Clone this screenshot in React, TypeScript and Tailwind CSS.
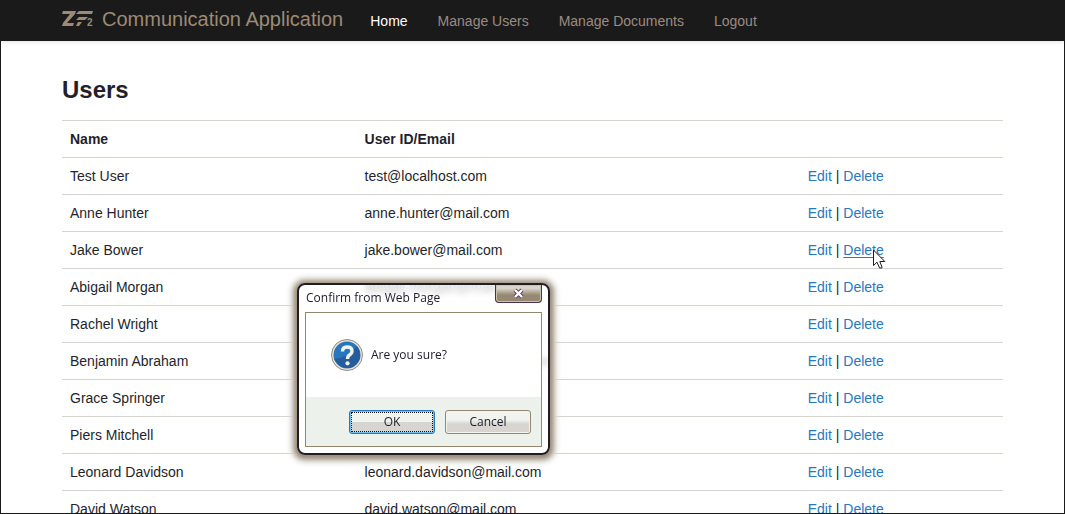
import React from "react";

type User = { name: string; email: string };

const users: User[] = [
  { name: "Test User", email: "test@localhost.com" },
  { name: "Anne Hunter", email: "anne.hunter@mail.com" },
  { name: "Jake Bower", email: "jake.bower@mail.com" },
  { name: "Abigail Morgan", email: "abigail.morgan@mail.com" },
  { name: "Rachel Wright", email: "rachel.wright@mail.com" },
  { name: "Benjamin Abraham", email: "benjamin.abraham@mail.com" },
  { name: "Grace Springer", email: "grace.springer@mail.com" },
  { name: "Piers Mitchell", email: "piers.mitchell@mail.com" },
  { name: "Leonard Davidson", email: "leonard.davidson@mail.com" },
  { name: "David Watson", email: "david.watson@mail.com" },
];

const navItems = ["Home", "Manage Users", "Manage Documents", "Logout"];

function Logo() {
  return (
    <svg width="32" height="16" viewBox="0 0 32 16" fill="#9b8b75" aria-hidden="true">
      <path d="M1 0H14L13 3L5 12H12L11 15H0L1 12L8 3H0Z" />
      <path d="M17 0H31L30 3H14Z" />
      <path d="M17 6H26L23 9H14Z" />
      <path d="M16 11H20L17 15H14Z" />
      <text x="25" y="15" fontSize="10" fontWeight="700" fontFamily="Liberation Sans, sans-serif">2</text>
    </svg>
  );
}

function Pointer() {
  return (
    <svg className="absolute left-[30px] top-[7px]" width="13" height="20" viewBox="0 0 13 20" aria-hidden="true">
      <path
        d="M.5 1V16.5L4 13.2L6.6 19H8.8L9 18L6.8 12.5H11.8Z"
        fill="#fff"
        stroke="#221a24"
        strokeWidth="1"
      />
    </svg>
  );
}

function Header() {
  return (
    <header className="h-10 shrink-0 bg-[#1a1a1a] shadow-[0_1px_4px_#dde3dc]">
      <div className="mx-auto flex h-10 max-w-[941px] items-center">
        <a href="#" className="flex items-center gap-2 pb-1 text-xl leading-5 text-[#9b8b75]">
          <Logo />
          <span>Communication Application</span>
        </a>
        <nav className="ml-3 flex">
          {navItems.map((item, i) => (
            <a
              key={item}
              href="#"
              className={i === 0 ? "px-[15px] text-sm text-white" : "px-[15px] text-sm text-[#9b8b82]"}
            >
              {item}
            </a>
          ))}
        </nav>
      </div>
    </header>
  );
}

function ConfirmDialog() {
  return (
    <div
      role="dialog"
      aria-labelledby="confirm-title"
      className="absolute left-[296px] top-[282px] w-[253px] rounded-lg border-2 border-[#211d22] bg-white/70 px-1.5 pb-1.5 font-['Open_Sans',sans-serif] text-xs text-[#1c1a2b] shadow-[0_1px_4px_3px_#9a8c7a,0_1px_5px_7px_#dcdad5] backdrop-blur-[3px]"
    >
      <div className="flex h-[27px] items-start justify-between">
        <h2 id="confirm-title" className="pl-px pt-[5px] leading-4">Confirm from Web Page</h2>
        <button
          type="button"
          aria-label="Close"
          className="flex h-[18px] w-[47px] items-center justify-center rounded-b-[4px] border border-t-0 border-[#43304a] bg-linear-to-b from-[#d8d4cb] from-20% to-[#978871] to-60% shadow-[inset_0_0_0_1px_#c9c2b6]"
        >
          <svg width="13" height="11" viewBox="0 0 13 11" aria-hidden="true">
            <path d="M3 2L10 9M10 2L3 9" stroke="#5b3c5c" strokeWidth="4" />
            <path d="M3 2L10 9M10 2L3 9" stroke="#fff" strokeWidth="2.4" />
          </svg>
        </button>
      </div>
      <div className="border border-[#94876f]">
        <div className="flex h-[84px] items-center gap-2 bg-white pl-[25px]">
          <svg width="32" height="32" viewBox="0 0 32 32" aria-hidden="true">
            <circle cx="16" cy="16" r="15.5" fill="#e7e5df" stroke="#978a77" />
            <circle cx="16" cy="16" r="13.5" fill="#2877bd" />
            <path d="M3 20Q16 20 26 7Q34 20 22 28Q10 32 3 20Z" fill="#265b9c" />
            <path d="M11.5 12.5Q11.5 8 16 8Q21 8 21 12Q21 14.5 18.5 16Q16.5 17.2 16.5 20" fill="none" stroke="#f1f2ed" strokeWidth="3.4" />
            <circle cx="16.5" cy="24.3" r="2.1" fill="#f1f2ed" />
          </svg>
          <p>Are you sure?</p>
        </div>
        <div className="flex h-[49px] items-center justify-end gap-2.5 bg-[#ecf1ec] pr-2.5">
          <button
            type="button"
            className="h-6 w-[86px] rounded-[3px] border border-[#2878b9] bg-linear-to-b from-[#f1f3ef] from-50% to-[#d8d4d0] to-50% p-px shadow-[inset_0_0_0_1px_#75c0ec]"
          >
            <span className="flex h-5 items-center justify-center border border-dotted border-[#111]">OK</span>
          </button>
          <button
            type="button"
            className="h-6 w-[86px] rounded-[3px] border border-[#94876f] bg-linear-to-b from-[#f1f3ef] from-40% to-[#d8d4d0] to-60% shadow-[inset_0_0_0_1px_#f3f3f0]"
          >
            Cancel
          </button>
        </div>
      </div>
    </div>
  );
}

export default function App() {
  return (
    <div className="relative flex h-screen flex-col overflow-hidden border border-[#1a1a1a] bg-white font-['Liberation_Sans',Arial,sans-serif] text-sm text-[#241f2b]">
      <Header />
      <main className="mx-auto w-full max-w-[941px] pt-[29px]">
        <h1 className="text-2xl leading-10 font-bold">Users</h1>
        <table className="mt-2.5 w-full table-fixed text-left">
          <thead>
            <tr className="border-t border-[#d6d4cf]">
              <th className="w-[31.3%] p-2 leading-5">Name</th>
              <th className="w-[47.1%] p-2 leading-5">User ID/Email</th>
              <th className="p-2 leading-5" aria-label="Actions" />
            </tr>
          </thead>
          <tbody>
            {users.map((user) => (
              <tr key={user.name} className="border-t border-[#d6d4cf]">
                <td className="p-2 leading-5">{user.name}</td>
                <td className="p-2 leading-5">{user.email}</td>
                <td className="p-2 leading-5">
                  <a href="#" className="text-[#2878bd]">Edit</a>
                  {" | "}
                  {user.name === "Jake Bower" ? (
                    <a href="#" className="relative text-[#2878bd] underline underline-offset-2">
                      Delete
                      <Pointer />
                    </a>
                  ) : (
                    <a href="#" className="text-[#2878bd]">Delete</a>
                  )}
                </td>
              </tr>
            ))}
          </tbody>
        </table>
      </main>
      <ConfirmDialog />
    </div>
  );
}
